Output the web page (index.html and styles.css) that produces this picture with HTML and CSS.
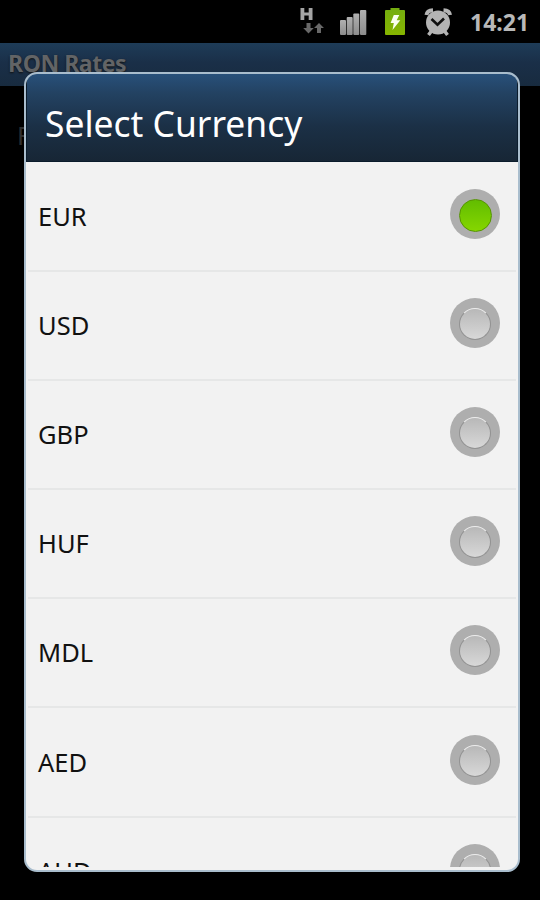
FILE: index.html
```html
<!DOCTYPE html>
<html lang="en">
<head>
<meta charset="utf-8">
<title>RON Rates</title>
<link rel="stylesheet" href="styles.css">
</head>
<body>
<header class="status">
  <svg class="status-icons" width="160" height="43" viewBox="296 0 160 43" aria-hidden="true">
    <defs>
      <linearGradient id="bar" x2="0" y2="1"><stop stop-color="#b0b0b0"/><stop offset="1" stop-color="#8c8c8c"/></linearGradient>
      <linearGradient id="cell" x2="0" y2="1"><stop stop-color="#74ad10"/><stop offset="1" stop-color="#86b500"/></linearGradient>
    </defs>
    <path d="M300.500 8h3.800v4.500h4.400V8h3.800v12h-3.800v-4.500h-4.400V20h-3.800z" fill="#a4a4a4"/>
    <path d="M306.500 23h4v5h3.300l-5.300 5.500-5.300-5.500h3.300z" fill="#686868"/>
    <path d="M319 23l5 5h-3v5h-4v-5h-3z" fill="#686868"/>
    <g fill="url(#bar)">
      <rect x="340" y="20" width="6" height="15" rx="1"/>
      <rect x="346.700" y="17" width="6" height="18" rx="1"/>
      <rect x="353.300" y="13.500" width="6" height="21.500" rx="1"/>
      <rect x="360" y="10" width="6.300" height="25" rx="1"/>
    </g>
    <path d="M386 10h4.500V8h9v2h4.500q1 0 1 1v23q0 1-1 1h-18q-1 0-1-1V11q0-1 1-1z" fill="url(#cell)"/>
    <path d="M393.800 15h5.500l-2.600 5.300h3.600L392.500 30l1.300-7h-3.200z" fill="#fafff0"/>
    <g fill="none" stroke="#b4b4b4">
      <path d="M426.500 15Q427 10.500 433 10.200M443.500 10.200Q449.500 10.500 450 15" stroke-width="4"/>
      <path d="M431.500 31l-3 4M444.500 31l3 4" stroke-width="3.500"/>
    </g>
    <circle cx="438" cy="22.500" r="12" fill="#b4b4b4"/>
    <path d="M431.500 19l6 5.800 6.500-6.300" fill="none" stroke="#111" stroke-width="2.600"/>
  </svg>
  <time class="clock">14:21</time>
</header>
<div class="appbar">RON Rates</div>
<div class="behind">R</div>
<section class="dialog" role="dialog" aria-label="Select Currency">
  <h1 class="title"><span>Select Currency</span></h1>
  <ul class="list">
    <li class="row"><span>EUR</span><i class="radio on"></i></li>
    <li class="row"><span>USD</span><i class="radio"></i></li>
    <li class="row"><span>GBP</span><i class="radio"></i></li>
    <li class="row"><span>HUF</span><i class="radio"></i></li>
    <li class="row"><span>MDL</span><i class="radio"></i></li>
    <li class="row"><span>AED</span><i class="radio"></i></li>
    <li class="row"><span>AUD</span><i class="radio"></i></li>
  </ul>
</section>
</body>
</html>
```
FILE: styles.css
```css
*, *::before { box-sizing: border-box; }
body {
  position: relative;
  width: 540px;
  height: 900px;
  margin: 0;
  overflow: hidden;
  background: #000;
  font-family: "Noto Sans", "Open Sans", sans-serif;
}
.status {
  display: flex;
  align-items: center;
  justify-content: flex-end;
  height: 43px;
  padding-right: 12px;
}
.status-icons { flex: none; margin-right: 14px; }
.clock {
  width: 58px;
  padding-top: 1px;
  color: #b8b8b8;
  font-size: 23px;
  font-weight: 700;
  line-height: 43px;
  white-space: nowrap;
}
.appbar {
  height: 43px;
  padding-left: 8px;
  background: linear-gradient(#1e3c58, #1a2f48 45%, #182b3f);
  color: #626466;
  font-size: 23px;
  font-weight: 700;
  letter-spacing: -0.45px;
  line-height: 41px;
  text-shadow: 0 1px 2px #111;
}
.behind {
  padding: 32px 0 0 17px;
  color: #303030;
  font-size: 25px;
}
.dialog {
  position: absolute;
  top: 72px;
  left: 24px;
  display: flex;
  flex-direction: column;
  width: 496px;
  height: 800px;
  padding-bottom: 3px;
  overflow: hidden;
  border: 2px solid #a9bdcd;
  border-radius: 13px;
  background: #f2f2f2;
}
.title {
  flex: none;
  height: 88px;
  margin: 0;
  padding-left: 18px;
  border: 1px solid #0b1c2c;
  border-top: 0;
  background: linear-gradient(#28507a, #234262 22%, #1b3046 60%, #172635);
  color: #fff;
  font-size: 37px;
  font-weight: 400;
  line-height: 98px;
  white-space: nowrap;
}
.title span {
  display: inline-block;
  transform: scaleX(0.957);
  transform-origin: left;
}
.list {
  flex: 1;
  min-height: 0;
  margin: 0;
  padding: 1px 0 0;
  overflow: hidden;
  list-style: none;
}
.row {
  display: flex;
  align-items: center;
  justify-content: space-between;
  height: 109.100px;
  margin: 0 2px;
  padding: 0 16px 5px 10px;
  border-bottom: 2px solid #e6e7e7;
  color: #111;
  font-size: 25.500px;
}
.row span { padding-top: 4px; }
.radio {
  display: flex;
  align-items: center;
  justify-content: center;
  width: 50px;
  height: 50px;
  border-radius: 50%;
  background: #aeaeae;
}
.radio::before {
  content: "";
  width: 32px;
  height: 32px;
  margin-top: 2px;
  border: 1px solid #929292;
  border-top-color: #ededed;
  border-radius: 50%;
  background: linear-gradient(#b8b8b8, #d8d8d8);
}
.radio.on::before {
  width: 33px;
  height: 33px;
  border-color: #559500;
  background: linear-gradient(#62bd00, #85d600);
}
```
